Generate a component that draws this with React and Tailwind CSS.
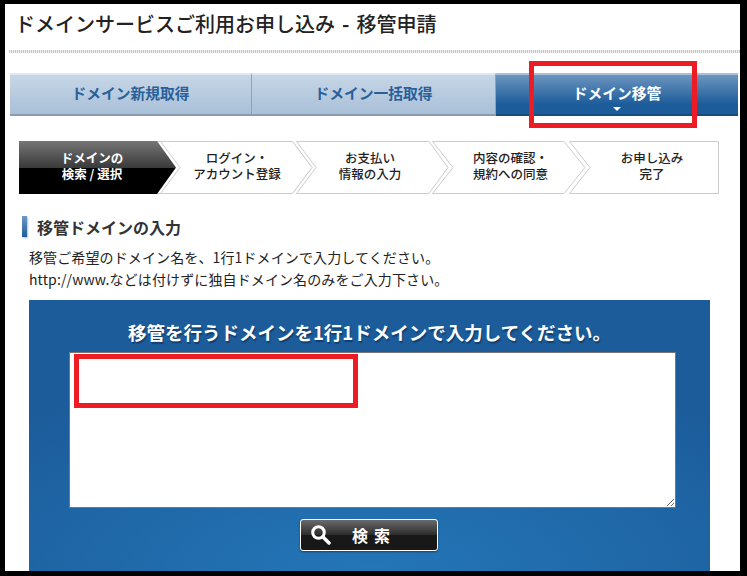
const font = "font-['Noto_Sans_CJK_JP','Noto_Sans',sans-serif]"

const tabs = [
	{ name: "ドメイン新規取得", width: "w-[242px]", active: false },
	{ name: "ドメイン一括取得", width: "w-[244px]", active: false },
	{ name: "ドメイン移管", width: "w-[242px]", active: true },
]

const steps = [
	{ lines: ["ドメインの", "検索 / 選択"], width: "w-[141px] pl-[5px]", color: "text-white font-bold" },
	{ lines: ["ログイン・", "アカウント登録"], width: "w-[136px] pl-[18px]", color: "text-[#222] font-medium" },
	{ lines: ["お支払い", "情報の入力"], width: "w-[136px] pl-[12px]", color: "text-[#222] font-medium" },
	{ lines: ["内容の確認・", "規約への同意"], width: "w-[137px] pl-[20px]", color: "text-[#222] font-medium" },
	{ lines: ["お申し込み", "完了"], width: "w-[150px] pl-[16px]", color: "text-[#222] font-medium" },
]

function StepsArt() {
	return (
		<svg className="absolute inset-0" width="700" height="53" viewBox="0 0 700 53" fill="none">
			<defs>
				<linearGradient id="stepBlack" x1="0" y1="0" x2="0" y2="1">
					<stop offset="0" stopColor="#767676" />
					<stop offset="0.5" stopColor="#3a3a3a" />
					<stop offset="0.5" stopColor="#000" />
					<stop offset="1" stopColor="#000" />
				</linearGradient>
			</defs>
			<path d="M0.5 0.5H273.5L293 26.5L273.5 52.5H0.5Z" stroke="#ccc" fill="#fff" />
			<path d="M277.5 0.5H410L429 26.5L410 52.5H277.5L297 26.5Z" stroke="#ccc" fill="#fff" />
			<path d="M413.5 0.5H545L566 26.5L545 52.5H413.5L434 26.5Z" stroke="#ccc" fill="#fff" />
			<path d="M550.5 0.5H699.5V52.5H550.5L571 26.5Z" stroke="#ccc" fill="#fff" />
			<path d="M141.5 0.5L161 26.5L141.5 52.5" fill="#fff" />
			<path d="M141.5 0.5H273.5L293 26.5L273.5 52.5H141.5L161 26.5Z" stroke="#ccc" fill="#fff" />
			<path d="M0 0H138L157 26.5L138 53H0Z" fill="url(#stepBlack)" />
		</svg>
	)
}

export default function App() {
	return (
		<div className={`relative h-[576px] w-[747px] overflow-hidden bg-black pb-[5px] pl-[5px] pr-[7px] pt-[4px] ${font}`}>
			<div className="h-[567px] overflow-hidden bg-white">
				<h1 className="pl-[10px] pt-[6px] text-[20px] font-medium leading-[28px] text-[#222]">
					ドメインサービスご利用お申し込み<span className="px-[7px] font-bold">-</span>移管申請
				</h1>
				<div className="mt-[12px] ml-[4px] h-[3px] bg-[repeating-linear-gradient(90deg,#c4c4c4_0_1px,#f0f0f0_1px_2px)]" />

				<div className="ml-[5px] mt-[20px] flex h-[43px] w-[728px]">
					{tabs.map((tab) => (
						<div
							key={tab.name}
							className={`flex flex-col items-center border-b-2 border-t-2 text-[14.75px] font-bold ${tab.width} ${
								tab.active
									? "border-b-[#174c7e] border-t-[#a9c0d8] bg-[linear-gradient(#6c95bf,#1d5c9a_75%)] text-white"
									: "border-b-[#8a9db0] border-t-[#dfe8f0] border-r border-r-[#8fa3b6] bg-[linear-gradient(#c6d6e6,#a9c0d8)] text-[#2a6099]"
							}`}
						>
							<span className="mt-[7px] leading-[22px]">{tab.name}</span>
							{tab.active && <span className="mt-[3px] h-0 w-0 border-x-[4px] border-t-[4px] border-x-transparent border-t-white" />}
						</div>
					))}
				</div>

				<div className="relative ml-[14px] mt-[25px] flex h-[53px] w-[700px]">
					<StepsArt />
					{steps.map((step) => (
						<div key={step.lines[0]} className={`relative z-10 pt-[9px] text-center text-[12.5px] leading-[16px] ${step.width} ${step.color}`}>
							{step.lines[0]}
							<br />
							{step.lines[1]}
						</div>
					))}
				</div>

				<div className="ml-[17px] mt-[22px] flex h-[21px] items-center">
					<span className="h-[21px] w-[5px] bg-[linear-gradient(#6f9ac4,#1d5c9a)] shadow-[1px_1px_2px_#bbb]" />
					<h2 className="ml-[10px] text-[16px] font-bold text-[#333]">移管ドメインの入力</h2>
				</div>

				<p className="ml-[24px] mt-[9px] text-[14px] leading-[22px] tracking-[0.12px] text-[#222]">
					移管ご希望のドメイン名を、1行1ドメインで入力してください。
					<br />
					http://www.などは付けずに独自ドメイン名のみをご入力下さい。
				</p>

				<div className="ml-[24px] mt-[10px] flex h-[271px] w-[681px] flex-col items-center bg-[radial-gradient(ellipse_75%_75%_at_50%_100%,#2476b7,#1c5c9b)]">
					<h3 className="mt-[19px] text-[18.5px] font-bold leading-[26px] text-white [text-shadow:1px_2px_1px_#123f6e]">移管を行うドメインを1行1ドメインで入力してください。</h3>
					<textarea className="ml-[6px] mt-[7px] block h-[156px] w-[607px] border border-[#777] bg-white" />
					<button type="button" className="mt-[11px] -ml-[1px] flex h-[32px] w-[138px] items-center rounded-[3px] border border-white bg-[linear-gradient(#6a6a6a,#2c2c2c_50%,#181818_50%)] pl-[9px] text-white shadow-[0_1px_2px_#0006]">
						<svg width="21" height="22" viewBox="0 0 21 22" fill="none" stroke="#fff">
							<circle cx="8.5" cy="8.5" r="5.8" strokeWidth="3" />
							<path d="M13 13L19 19" strokeWidth="3.5" strokeLinecap="round" />
						</svg>
						<span className="ml-[21px] text-[16px] font-bold tracking-[6px]">検索</span>
					</button>
				</div>
			</div>

			<div className="absolute left-[529px] top-[61px] h-[67px] w-[168px] border-[5px] border-[#ed1c24]" />
			<div className="absolute left-[74px] top-[354px] h-[54px] w-[284px] border-[5px] border-[#ed1c24]" />
		</div>
	)
}
